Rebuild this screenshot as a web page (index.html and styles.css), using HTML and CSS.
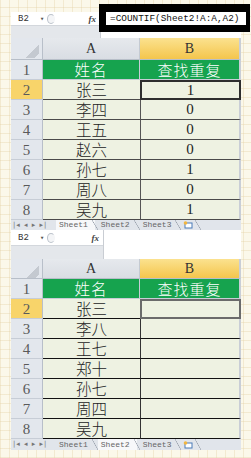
FILE: index.html
```html
<!DOCTYPE html>
<html lang="zh">
<head>
  <meta charset="UTF-8">
  <title>COUNTIF 查找重复</title>
  <link rel="stylesheet" href="styles.css">
</head>
<body>
  <div class="sheet first">
    <div class="fbar">
      <div class="fb-left">
        <div class="namebar">
          <span class="cellref">B2</span>
          <span class="drop">▾</span>
          <span class="knob"></span>
          <span class="fx">fx</span>
        </div>
        <div class="fb-gray"></div>
      </div>
      <div class="fb-input"></div>
    </div>
    <div class="callout"><div class="callout-text">=COUNTIF(Sheet2!A:A,A2)</div></div>

    <div class="grid">
      <div class="row head">
        <div class="num corner"></div>
        <div class="col a">A</div>
        <div class="col b sel">B</div>
      </div>
      <div class="row title">
        <div class="num">1</div>
        <div class="cell a">姓名</div>
        <div class="cell b">查找重复</div>
      </div>
      <div class="row"><div class="num sel">2</div><div class="cell a">张三</div><div class="cell b active">1</div></div>
      <div class="row"><div class="num">3</div><div class="cell a">李四</div><div class="cell b">0</div></div>
      <div class="row"><div class="num">4</div><div class="cell a">王五</div><div class="cell b">0</div></div>
      <div class="row"><div class="num">5</div><div class="cell a">赵六</div><div class="cell b">0</div></div>
      <div class="row"><div class="num">6</div><div class="cell a">孙七</div><div class="cell b">1</div></div>
      <div class="row"><div class="num">7</div><div class="cell a">周八</div><div class="cell b">0</div></div>
      <div class="row"><div class="num">8</div><div class="cell a">吴九</div><div class="cell b">1</div></div>
    </div>

    <div class="tabs">
      <span class="nav">|◂ ◂ ▸ ▸|</span>
      <span class="tab on">Sheet1</span>
      <span class="tab">Sheet2</span>
      <span class="tab">Sheet3</span>
      <span class="tab newtab">
        <svg width="10" height="8" viewBox="0 0 10 8"><rect x="2" y="2" width="7" height="5" fill="#fff" stroke="#4a7bb7"/><circle cx="2.5" cy="2" r="1.8" fill="#f2b640"/></svg>
      </span>
    </div>
  </div>

  <div class="sheet second">
    <div class="fbar">
      <div class="fb-left">
        <div class="namebar">
          <span class="cellref">B2</span>
          <span class="drop">▾</span>
          <span class="knob"></span>
          <span class="fx">fx</span>
        </div>
        <div class="fb-gray"></div>
      </div>
      <div class="fb-input"></div>
    </div>

    <div class="grid">
      <div class="row head">
        <div class="num corner"></div>
        <div class="col a">A</div>
        <div class="col b sel">B</div>
      </div>
      <div class="row title">
        <div class="num">1</div>
        <div class="cell a">姓名</div>
        <div class="cell b">查找重复</div>
      </div>
      <div class="row"><div class="num sel">2</div><div class="cell a">张三</div><div class="cell b active"></div></div>
      <div class="row"><div class="num">3</div><div class="cell a">李八</div><div class="cell b"></div></div>
      <div class="row"><div class="num">4</div><div class="cell a">王七</div><div class="cell b"></div></div>
      <div class="row"><div class="num">5</div><div class="cell a">郑十</div><div class="cell b"></div></div>
      <div class="row"><div class="num">6</div><div class="cell a">孙七</div><div class="cell b"></div></div>
      <div class="row"><div class="num">7</div><div class="cell a">周四</div><div class="cell b"></div></div>
      <div class="row"><div class="num">8</div><div class="cell a">吴九</div><div class="cell b"></div></div>
    </div>

    <div class="tabs">
      <span class="nav">|◂ ◂ ▸ ▸|</span>
      <span class="tab">Sheet1</span>
      <span class="tab on">Sheet2</span>
      <span class="tab">Sheet3</span>
      <span class="tab newtab">
        <svg width="10" height="8" viewBox="0 0 10 8"><rect x="2" y="2" width="7" height="5" fill="#fff" stroke="#4a7bb7"/><circle cx="2.5" cy="2" r="1.8" fill="#f2b640"/></svg>
      </span>
    </div>
  </div>
</body>
</html>
```

FILE: styles.css
```css
body {
  margin: 0;
  height: 458px;
  background-color: #fbf8ea;
  background-image:
    repeating-linear-gradient(0deg, rgba(226, 206, 160, 0.35) 0 1px, transparent 1px 9px),
    repeating-linear-gradient(90deg, rgba(226, 206, 160, 0.35) 0 1px, transparent 1px 9px);
  font-family: "Liberation Serif", "Noto Sans CJK SC", serif;
  color: #222;
  position: relative;
}
.sheet {
  width: 230px;
  margin-left: 11px;
}
.first {
  padding-top: 12px;
}

/* formula bar */
.fbar {
  display: flex;
  background: #fff;
}
.fb-left {
  width: 89px;
  display: flex;
  flex-direction: column;
}
.second .fb-left {
  width: 92px;
}
.namebar {
  height: 13px;
  display: flex;
  align-items: center;
  background: #fff;
  font-family: "Liberation Mono", monospace;
  font-size: 9px;
  color: #333;
}
.second .namebar {
  height: 15px;
}
.cellref {
  margin-left: 7px;
  width: 22px;
}
.drop {
  font-size: 7px;
  color: #555;
  width: 7px;
}
.knob {
  width: 6px;
  height: 8px;
  border: 1px solid #bcc3cc;
  border-radius: 50%;
  border-right-color: transparent;
  background: #f4f5f7;
}
.fx {
  margin-left: auto;
  margin-right: 4px;
  font-family: "Liberation Serif", serif;
  font-style: italic;
  font-weight: bold;
  font-size: 9px;
  color: #444;
}
.fb-gray {
  height: 12px;
  background: #e4e7eb;
  border-top: 1px solid #d3d7dc;
}
.second .fb-gray {
  height: 13px;
}
.fb-input {
  flex: 1;
  background: #fff;
  border-left: 1px solid #c9cdd3;
}

/* highlighted formula callout */
.callout {
  position: absolute;
  left: 99px;
  top: 4px;
  width: 151px;
  height: 28px;
  background: #000;
  box-sizing: border-box;
  padding: 8px 4px 7px 7px;
}
.callout-text {
  height: 13px;
  background: #fff;
  font-family: "Liberation Mono", monospace;
  font-size: 9.4px;
  line-height: 13px;
  padding-left: 4px;
  color: #111;
  white-space: nowrap;
}

/* cells */
.row {
  display: flex;
  height: 20px;
}
.num {
  width: 32px;
  flex: none;
  background: #e3e7ed;
  border-bottom: 1px solid #c7cdd6;
  border-right: 1px solid #b8bfc9;
  box-sizing: border-box;
  text-align: center;
  font-size: 15px;
  line-height: 20px;
  color: #5a5a5a;
}
.num.sel {
  background: #f8d46a;
}
.cell, .col {
  box-sizing: border-box;
  text-align: center;
  line-height: 19px;
}
.a {
  width: 97px;
  flex: none;
}
.b {
  width: 101px;
  flex: none;
  border-right: 2px solid #c9ced6;
}
.cell {
  background: #eef2e2;
  border-bottom: 1px solid #4a4a4a;
  font-size: 15.5px;
  font-family: "Noto Sans CJK SC", sans-serif;
  font-weight: 300;
}
.cell.b {
  border-left: 1px solid #555;
  font-family: "Liberation Serif", serif;
  font-size: 15px;
  font-weight: normal;
}
.second .cell {
  border-bottom-color: #111;
}
.second .cell.b {
  border-left-color: #333;
}
.head {
  height: 22px;
}
.second .head {
  height: 20px;
}
.col {
  background: linear-gradient(#e6e9ed, #d9dde3);
  border-bottom: 1px solid #b7bec8;
  border-right: 1px solid #c4cad2;
  font-size: 14px;
  color: #333;
  line-height: 22px;
}
.second .col {
  line-height: 20px;
}
.col.sel {
  background: linear-gradient(#fbe28f, #f4c54c);
  border-right: 2px solid #c9ced6;
}
.corner {
  background: #e3e7ed linear-gradient(135deg, transparent 58%, #c4c9d0 58%, #c4c9d0 86%, transparent 86%) no-repeat 12px 4px / 16px 16px;
  border-bottom: 1px solid #b7bec8;
}
.title .cell {
  background: #16a34e;
  color: #fff;
  border-bottom: 1px solid #c7cdd6;
  border-left: none;
  font-family: "Noto Sans CJK SC", sans-serif;
  font-weight: 300;
  letter-spacing: 1px;
}
.title .cell.a {
  border-right: 1px solid #c7cdd6;
}
.cell.active {
  border: 2px solid #2e2e2e;
  border-right: 2px solid #2e2e2e;
  line-height: 16px;
}
.second .cell.active {
  border-color: #6b6b6b;
}

/* sheet tabs */
.tabs {
  height: 10px;
  display: flex;
  align-items: stretch;
  background: #e1e5eb;
  font-family: "Liberation Mono", monospace;
  font-size: 8px;
  line-height: 10px;
  color: #666;
  overflow: hidden;
}
.second .tabs {
  height: 11px;
  line-height: 11px;
}
.nav {
  width: 45px;
  padding-left: 2px;
  font-family: "DejaVu Sans", sans-serif;
  font-size: 7px;
  letter-spacing: 1px;
  color: #777;
  box-sizing: border-box;
}
.tab {
  padding: 0 10px 0 3px;
  background: linear-gradient(to top right, transparent calc(50% - 0.6px), #9aa2ad, transparent calc(50% + 0.6px)) no-repeat right / 6px 100%;
}
.tab.on {
  background:
    linear-gradient(to top right, transparent calc(50% - 0.6px), #9aa2ad, transparent calc(50% + 0.6px)) no-repeat right / 6px 100%,
    linear-gradient(#f7f8fa, #f7f8fa) no-repeat left / calc(100% - 3px) 100%;
}
.newtab {
  display: flex;
  align-items: center;
  padding: 0 8px 0 2px;
}
```
